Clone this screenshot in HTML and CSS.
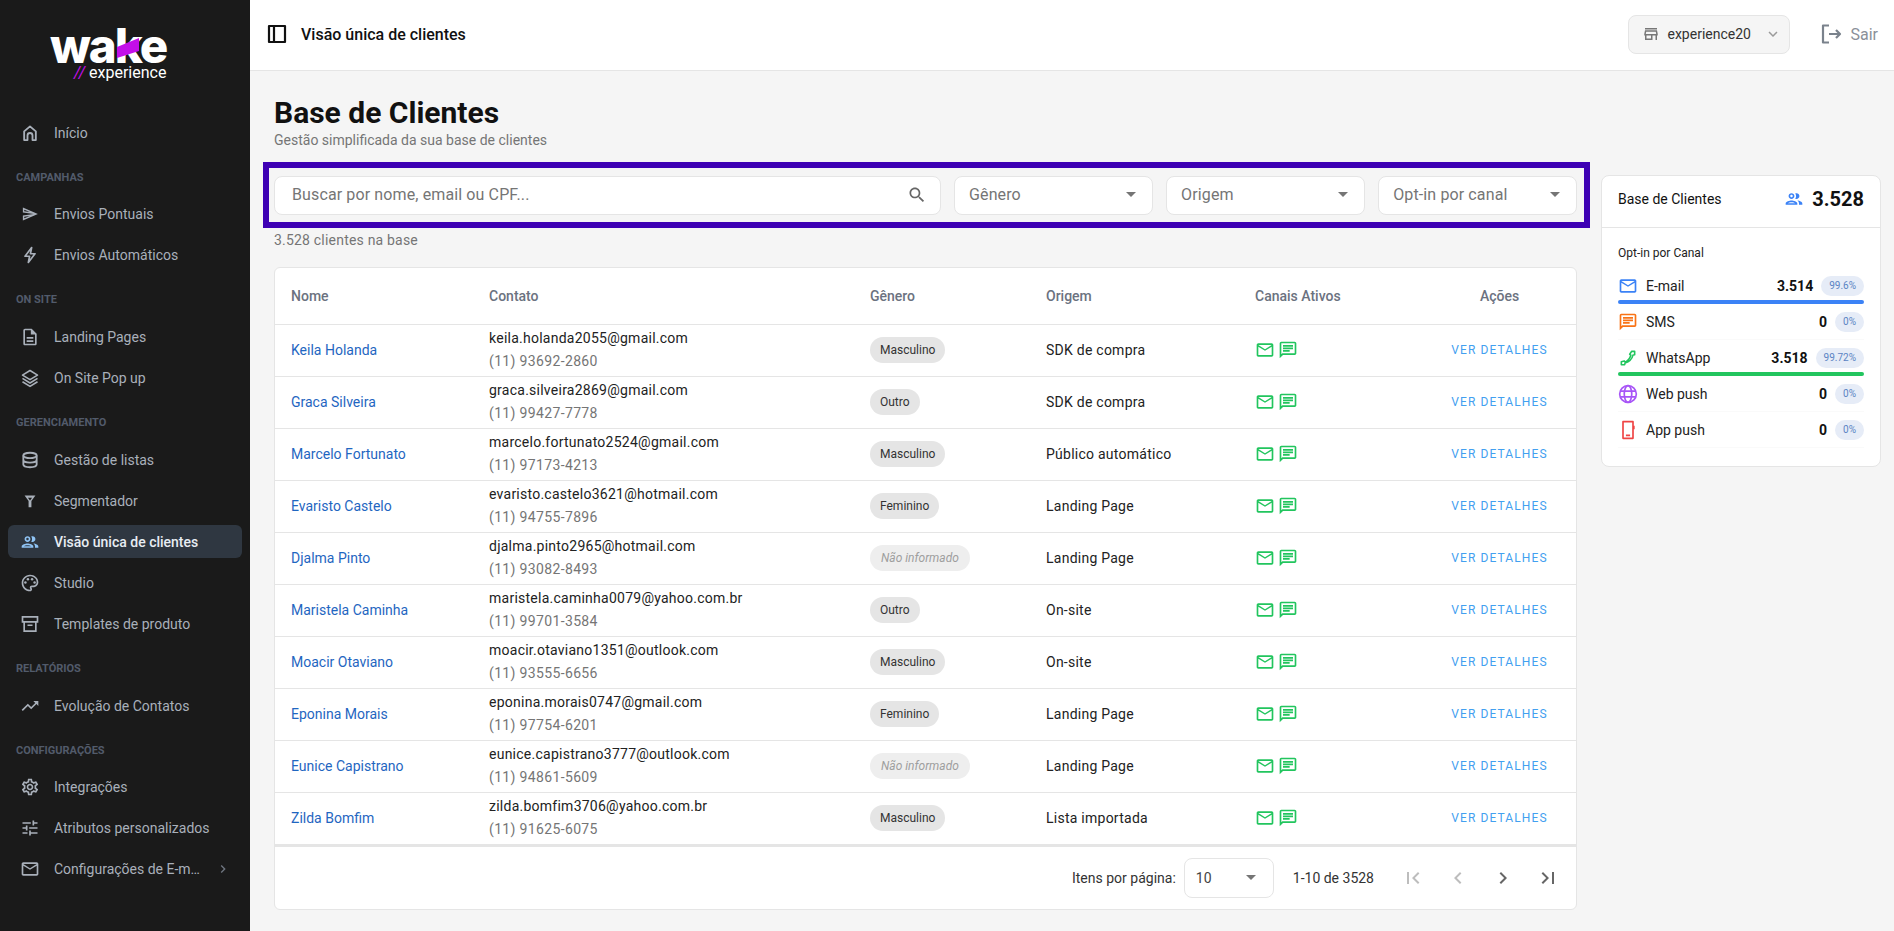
FILE: index.html
```html
<!DOCTYPE html>
<html lang="pt-BR">
<head>
    <meta charset="UTF-8">
    <meta name="viewport" content="width=device-width, initial-scale=1.0">
    <title>Visão única de clientes</title>
    <link rel="stylesheet" href="styles.css">
</head>
<body>

    <!-- icon sprite -->
    <svg class="sprite" xmlns="http://www.w3.org/2000/svg">
        <symbol id="i-home" viewBox="0 0 24 24"><path d="M5 20.500V10l7-6 7 6v10.500h-4V15a3 3 0 0 0-6 0v5.500z" fill="none" stroke="currentColor" stroke-width="2.200" stroke-linejoin="round"/></symbol>
        <symbol id="i-send" viewBox="-2 -2 28 28"><path d="M4.010 6.030l7.510 3.220-7.520-1 .01-2.220m7.500 8.720L4 17.970v-2.220l7.510-1M2.010 3L2 10l15 2-15 2 .01 7L23 12 2.010 3z"/></symbol>
        <symbol id="i-bolt" viewBox="0 0 24 24"><path d="M14 3L6 13.500h5.500L10 21l8-10.500h-5.500z" fill="none" stroke="currentColor" stroke-width="2" stroke-linejoin="round"/></symbol>
        <symbol id="i-doc" viewBox="0 0 24 24"><path d="M8 16h8v2H8zm0-4h8v2H8zm6-10H6c-1.100 0-2 .9-2 2v16c0 1.100.89 2 1.990 2H18c1.100 0 2-.9 2-2V8l-6-6zm4 18H6V4h7v5h5v11z"/></symbol>
        <symbol id="i-layers" viewBox="0 0 24 24"><path d="M12 3l9 5.500-9 5.500-9-5.500zM3 12.500l9 5.500 9-5.500M3 16.500l9 5.500 9-5.500" fill="none" stroke="currentColor" stroke-width="1.900" stroke-linejoin="round"/></symbol>
        <symbol id="i-db" viewBox="0 0 24 24"><g fill="none" stroke="currentColor" stroke-width="2.200"><ellipse cx="12" cy="6.500" rx="8" ry="3.200"/><path d="M4 6.500v11c0 1.800 3.600 3.200 8 3.200s8-1.400 8-3.200v-11M4 12c0 1.800 3.600 3.200 8 3.200s8-1.400 8-3.200"/></g></symbol>
        <symbol id="i-filter" viewBox="0 0 24 24"><path d="M5.500 5.500h13l-4.800 6.500v7.500h-3.400V12zM9.500 8l2.500 3.300L14.500 8z" fill-rule="evenodd"/></symbol>
        <symbol id="i-group" viewBox="0 0 24 24"><path d="M9 13.750c-2.340 0-7 1.170-7 3.500V19h14v-1.750c0-2.330-4.660-3.500-7-3.500zM4.340 17c.84-.58 2.870-1.250 4.660-1.250s3.820.67 4.660 1.250H4.340zM9 12c1.930 0 3.500-1.570 3.500-3.500S10.930 5 9 5 5.500 6.570 5.500 8.500 7.070 12 9 12zm0-5c.83 0 1.500.67 1.500 1.500S9.830 10 9 10s-1.500-.67-1.500-1.500S8.170 7 9 7zm7.040 6.810c1.160.84 1.960 1.960 1.960 3.440V19h4v-1.750c0-2.020-3.500-3.170-5.960-3.440zM15 12c1.930 0 3.500-1.570 3.500-3.500S16.930 5 15 5c-.54 0-1.040.13-1.500.35.63.89 1 1.980 1 3.150s-.37 2.260-1 3.150c.46.22.96.35 1.500.35z"/></symbol>
        <symbol id="i-palette" viewBox="0 0 24 24"><path d="M12 22C6.490 22 2 17.510 2 12S6.490 2 12 2s10 4.040 10 9c0 3.310-2.690 6-6 6h-1.770c-.28 0-.5.22-.5.5 0 .12.05.23.13.33.41.47.64 1.060.64 1.670 0 1.380-1.120 2.500-2.500 2.500zm0-18c-4.410 0-8 3.590-8 8s3.590 8 8 8c.28 0 .5-.22.5-.5 0-.16-.08-.28-.14-.35-.41-.46-.63-1.050-.63-1.650 0-1.380 1.120-2.500 2.500-2.500H16c2.210 0 4-1.790 4-4 0-3.860-3.590-7-8-7z"/><circle cx="6.500" cy="11.500" r="1.500"/><circle cx="9.500" cy="7.500" r="1.500"/><circle cx="14.500" cy="7.500" r="1.500"/><circle cx="17.500" cy="11.500" r="1.500"/></symbol>
        <symbol id="i-archive" viewBox="0 0 24 24"><path d="M3 3.500h18v6H3zm2 6h14v11H5zm4 4h6" fill="none" stroke="currentColor" stroke-width="2"/></symbol>
        <symbol id="i-trend" viewBox="0 0 24 24"><path d="M16 6l2.290 2.290-4.880 4.880-4-4L2 16.590 3.410 18l6-6 4 4 6.300-6.290L22 12V6z"/></symbol>
        <symbol id="i-gear" viewBox="0 0 24 24"><path d="M19.430 12.980c.04-.32.07-.64.07-.98 0-.34-.03-.66-.07-.98l2.110-1.650c.19-.15.24-.42.12-.64l-2-3.460c-.09-.16-.26-.25-.44-.25-.06 0-.12.01-.17.03l-2.490 1c-.52-.4-1.080-.73-1.690-.98l-.38-2.650C14.460 2.180 14.250 2 14 2h-4c-.25 0-.46.18-.49.42l-.38 2.650c-.61.25-1.170.59-1.690.98l-2.490-1c-.06-.02-.12-.03-.18-.03-.17 0-.34.09-.43.25l-2 3.460c-.13.22-.07.49.12.64l2.110 1.650c-.04.32-.07.65-.07.98 0 .33.03.66.07.98l-2.110 1.650c-.19.15-.24.42-.12.64l2 3.460c.09.16.26.25.44.25.06 0 .12-.01.17-.03l2.490-1c.52.4 1.080.73 1.690.98l.38 2.650c.03.24.24.42.49.42h4c.25 0 .46-.18.49-.42l.38-2.650c.61-.25 1.170-.59 1.690-.98l2.490 1c.06.02.12.03.18.03.17 0 .34-.09.43-.25l2-3.460c.12-.22.07-.49-.12-.64l-2.110-1.650zm-1.980-1.710c.04.31.05.52.05.73 0 .21-.02.43-.05.73l-.14 1.130.89.7 1.080.84-.7 1.210-1.270-.51-1.040-.42-.9.68c-.43.32-.84.56-1.250.73l-1.060.43-.16 1.130-.2 1.350h-1.400l-.19-1.350-.16-1.130-1.060-.43c-.43-.18-.83-.41-1.230-.71l-.91-.7-1.060.43-1.270.51-.7-1.210 1.080-.84.89-.7-.14-1.130c-.03-.31-.05-.54-.05-.74s.02-.43.05-.73l.14-1.130-.89-.7-1.080-.84.7-1.210 1.270.51 1.040.42.9-.68c.43-.32.84-.56 1.250-.73l1.060-.43.16-1.130.2-1.350h1.390l.19 1.350.16 1.130 1.060.43c.43.18.83.41 1.230.71l.91.7 1.060-.43 1.270-.51.7 1.210-1.070.85-.89.7.14 1.130zM12 8c-2.210 0-4 1.790-4 4s1.790 4 4 4 4-1.790 4-4-1.790-4-4-4zm0 6c-1.100 0-2-.9-2-2s.9-2 2-2 2 .9 2 2-.9 2-2 2z"/></symbol>
        <symbol id="i-tune" viewBox="0 0 24 24"><path d="M3 17v2h6v-2H3zM3 5v2h10V5H3zm10 16v-2h8v-2h-8v-2h-2v6h2zM7 9v2H3v2h4v2h2V9H7zm14 4v-2H11v2h10zm-6-4h2V7h4V5h-4V3h-2v6z"/></symbol>
        <symbol id="i-mail" viewBox="0 0 24 24"><path d="M22 6c0-1.100-.9-2-2-2H4c-1.100 0-2 .9-2 2v12c0 1.100.9 2 2 2h16c1.100 0 2-.9 2-2V6zm-2 0l-8 5-8-5h16zm0 12H4V8l8 5 8-5v10z"/></symbol>
        <symbol id="i-chat" viewBox="0 0 24 24"><path d="M20 2H4c-1.100 0-2 .9-2 2v18l4-4h14c1.100 0 2-.9 2-2V4c0-1.100-.9-2-2-2zm0 14H5.170L4 17.170V4h16v12zM6 12h8v2H6zm0-3h12v2H6zm0-3h12v2H6z"/></symbol>
        <symbol id="i-phone" viewBox="0 0 24 24"><path d="M16.500 4h3.500v4l-2 .5c-1 4-4.500 8-9.500 9.500L8 20H4v-3.500l3.500-1 1 1.500c3-1.500 6-5 7-8.500l-1.500-1z" fill="none" stroke="currentColor" stroke-width="1.900" stroke-linejoin="round"/></symbol>
        <symbol id="i-globe" viewBox="0 0 24 24"><g fill="none" stroke="currentColor" stroke-width="2"><circle cx="12" cy="12" r="10"/><ellipse cx="12" cy="12" rx="4.500" ry="10"/><path d="M3 8.500h18M3 15.500h18"/></g></symbol>
        <symbol id="i-mobile" viewBox="0 0 24 24"><path d="M6 2h12v20H6zM9.500 18.500h5M19 7v4" fill="none" stroke="currentColor" stroke-width="2" stroke-linejoin="round"/></symbol>
        <symbol id="i-store" viewBox="0 0 24 24"><path d="M20 4H4v2h16V4zm1 10v-2l-1-5H4l-1 5v2h1v6h10v-6h4v6h2v-6h1zm-9 4H6v-4h6v4zm-6.960-6l.6-3h12.720l.6 3H5.040z"/></symbol>
        <symbol id="i-logout" viewBox="0 0 24 24"><path d="M10 3.500H4v17h6M10 12h10.500M17 8l4 4-4 4" fill="none" stroke="currentColor" stroke-width="2.200" stroke-linejoin="round"/></symbol>
        <symbol id="i-panel" viewBox="0 0 24 24"><path d="M4 4h16v16H4zM9 4v16" fill="none" stroke="currentColor" stroke-width="2.200" stroke-linejoin="round"/></symbol>
        <symbol id="i-search" viewBox="0 0 24 24"><path d="M15.500 14h-.79l-.28-.27C15.410 12.590 16 11.110 16 9.500 16 5.910 13.090 3 9.500 3S3 5.910 3 9.500 5.910 16 9.500 16c1.610 0 3.090-.59 4.230-1.570l.27.28v.79l5 4.990L20.490 19l-4.990-5zm-6 0C7.010 14 5 11.990 5 9.500S7.010 5 9.500 5 14 7.010 14 9.500 11.990 14 9.500 14z"/></symbol>
        <symbol id="i-expand" viewBox="0 0 24 24"><path d="M16.590 8.590L12 13.170 7.410 8.590 6 10l6 6 6-6z"/></symbol>
        <symbol id="i-right" viewBox="0 0 24 24"><path d="M10 6L8.590 7.410 13.170 12l-4.580 4.590L10 18l6-6z"/></symbol>
        <symbol id="i-left" viewBox="0 0 24 24"><path d="M15.410 7.410L14 6l-6 6 6 6 1.410-1.410L10.830 12z"/></symbol>
        <symbol id="i-first" viewBox="0 0 24 24"><path d="M18.410 16.590L13.820 12l4.590-4.590L17 6l-6 6 6 6zM6 6h2v12H6z"/></symbol>
        <symbol id="i-last" viewBox="0 0 24 24"><path d="M5.590 7.410L10.180 12l-4.590 4.590L7 18l6-6-6-6zM16 6h2v12h-2z"/></symbol>
    </svg>

    <div class="app">
        <aside class="sidebar">
            <div class="logo">
                <svg class="logo-mark" width="122" height="52" viewBox="0 0 122 52">
                    <text class="logo-word" x="0" y="43.500">wake</text>
                    <polygon class="logo-slash" points="67,28 89,19 89,32 67,39"/>
                </svg>
                <div class="logo-sub"><span class="logo-bars">//</span> experience</div>
            </div>
            <nav class="nav">
                <a class="nav-item"><svg class="nav-icon"><use href="#i-home"/></svg>Início</a>
                <div class="nav-label">Campanhas</div>
                <a class="nav-item"><svg class="nav-icon"><use href="#i-send"/></svg>Envios Pontuais</a>
                <a class="nav-item"><svg class="nav-icon"><use href="#i-bolt"/></svg>Envios Automáticos</a>
                <div class="nav-label">On site</div>
                <a class="nav-item"><svg class="nav-icon"><use href="#i-doc"/></svg>Landing Pages</a>
                <a class="nav-item"><svg class="nav-icon"><use href="#i-layers"/></svg>On Site Pop up</a>
                <div class="nav-label">Gerenciamento</div>
                <a class="nav-item"><svg class="nav-icon"><use href="#i-db"/></svg>Gestão de listas</a>
                <a class="nav-item"><svg class="nav-icon"><use href="#i-filter"/></svg>Segmentador</a>
                <a class="nav-item active"><svg class="nav-icon"><use href="#i-group"/></svg>Visão única de clientes</a>
                <a class="nav-item"><svg class="nav-icon"><use href="#i-palette"/></svg>Studio</a>
                <a class="nav-item"><svg class="nav-icon"><use href="#i-archive"/></svg>Templates de produto</a>
                <div class="nav-label">Relatórios</div>
                <a class="nav-item"><svg class="nav-icon"><use href="#i-trend"/></svg>Evolução de Contatos</a>
                <div class="nav-label">Configurações</div>
                <a class="nav-item"><svg class="nav-icon"><use href="#i-gear"/></svg>Integrações</a>
                <a class="nav-item"><svg class="nav-icon"><use href="#i-tune"/></svg>Atributos personalizados</a>
                <a class="nav-item"><svg class="nav-icon"><use href="#i-mail"/></svg>Configurações de E-m…<svg class="nav-more"><use href="#i-right"/></svg></a>
            </nav>
        </aside>

        <div class="main">
            <header class="topbar">
                <svg class="panel-icon"><use href="#i-panel"/></svg>
                <div class="topbar-title">Visão única de clientes</div>
                <div class="store-select">
                    <svg class="store-icon"><use href="#i-store"/></svg>
                    <span>experience20</span>
                    <svg class="store-arrow"><use href="#i-expand"/></svg>
                </div>
                <div class="logout"><svg class="logout-icon"><use href="#i-logout"/></svg>Sair</div>
            </header>

            <div class="content">
                <div class="left">
                    <h1 class="page-title">Base de Clientes</h1>
                    <p class="page-sub">Gestão simplificada da sua base de clientes</p>

                    <div class="filters">
                        <div class="field search">
                            <span class="placeholder">Buscar por nome, email ou CPF...</span>
                            <svg class="search-icon"><use href="#i-search"/></svg>
                        </div>
                        <div class="field select"><span class="placeholder">Gênero</span><span class="caret"></span></div>
                        <div class="field select"><span class="placeholder">Origem</span><span class="caret"></span></div>
                        <div class="field select"><span class="placeholder">Opt-in por canal</span><span class="caret"></span></div>
                    </div>
                    <p class="count">3.528 clientes na base</p>

                    <div class="table-card">
                        <table class="clients">
                            <colgroup>
                                <col class="col-name"><col class="col-contact"><col class="col-gender">
                                <col class="col-origin"><col class="col-channels"><col class="col-actions">
                            </colgroup>
                            <thead>
                                <tr><th>Nome</th><th>Contato</th><th>Gênero</th><th>Origem</th><th>Canais Ativos</th><th class="center">Ações</th></tr>
                            </thead>
                            <tbody>
                                <tr>
                                    <td class="name">Keila Holanda</td>
                                    <td><div class="email">keila.holanda2055@gmail.com</div><div class="phone">(11) 93692-2860</div></td>
                                    <td><span class="chip">Masculino</span></td>
                                    <td class="origin">SDK de compra</td>
                                    <td><svg class="ch"><use href="#i-mail"/></svg><svg class="ch"><use href="#i-chat"/></svg></td>
                                    <td class="center"><a class="details">Ver detalhes</a></td>
                                </tr>
                                <tr>
                                    <td class="name">Graca Silveira</td>
                                    <td><div class="email">graca.silveira2869@gmail.com</div><div class="phone">(11) 99427-7778</div></td>
                                    <td><span class="chip">Outro</span></td>
                                    <td class="origin">SDK de compra</td>
                                    <td><svg class="ch"><use href="#i-mail"/></svg><svg class="ch"><use href="#i-chat"/></svg></td>
                                    <td class="center"><a class="details">Ver detalhes</a></td>
                                </tr>
                                <tr>
                                    <td class="name">Marcelo Fortunato</td>
                                    <td><div class="email">marcelo.fortunato2524@gmail.com</div><div class="phone">(11) 97173-4213</div></td>
                                    <td><span class="chip">Masculino</span></td>
                                    <td class="origin">Público automático</td>
                                    <td><svg class="ch"><use href="#i-mail"/></svg><svg class="ch"><use href="#i-chat"/></svg></td>
                                    <td class="center"><a class="details">Ver detalhes</a></td>
                                </tr>
                                <tr>
                                    <td class="name">Evaristo Castelo</td>
                                    <td><div class="email">evaristo.castelo3621@hotmail.com</div><div class="phone">(11) 94755-7896</div></td>
                                    <td><span class="chip">Feminino</span></td>
                                    <td class="origin">Landing Page</td>
                                    <td><svg class="ch"><use href="#i-mail"/></svg><svg class="ch"><use href="#i-chat"/></svg></td>
                                    <td class="center"><a class="details">Ver detalhes</a></td>
                                </tr>
                                <tr>
                                    <td class="name">Djalma Pinto</td>
                                    <td><div class="email">djalma.pinto2965@hotmail.com</div><div class="phone">(11) 93082-8493</div></td>
                                    <td><span class="chip muted">Não informado</span></td>
                                    <td class="origin">Landing Page</td>
                                    <td><svg class="ch"><use href="#i-mail"/></svg><svg class="ch"><use href="#i-chat"/></svg></td>
                                    <td class="center"><a class="details">Ver detalhes</a></td>
                                </tr>
                                <tr>
                                    <td class="name">Maristela Caminha</td>
                                    <td><div class="email">maristela.caminha0079@yahoo.com.br</div><div class="phone">(11) 99701-3584</div></td>
                                    <td><span class="chip">Outro</span></td>
                                    <td class="origin">On-site</td>
                                    <td><svg class="ch"><use href="#i-mail"/></svg><svg class="ch"><use href="#i-chat"/></svg></td>
                                    <td class="center"><a class="details">Ver detalhes</a></td>
                                </tr>
                                <tr>
                                    <td class="name">Moacir Otaviano</td>
                                    <td><div class="email">moacir.otaviano1351@outlook.com</div><div class="phone">(11) 93555-6656</div></td>
                                    <td><span class="chip">Masculino</span></td>
                                    <td class="origin">On-site</td>
                                    <td><svg class="ch"><use href="#i-mail"/></svg><svg class="ch"><use href="#i-chat"/></svg></td>
                                    <td class="center"><a class="details">Ver detalhes</a></td>
                                </tr>
                                <tr>
                                    <td class="name">Eponina Morais</td>
                                    <td><div class="email">eponina.morais0747@gmail.com</div><div class="phone">(11) 97754-6201</div></td>
                                    <td><span class="chip">Feminino</span></td>
                                    <td class="origin">Landing Page</td>
                                    <td><svg class="ch"><use href="#i-mail"/></svg><svg class="ch"><use href="#i-chat"/></svg></td>
                                    <td class="center"><a class="details">Ver detalhes</a></td>
                                </tr>
                                <tr>
                                    <td class="name">Eunice Capistrano</td>
                                    <td><div class="email">eunice.capistrano3777@outlook.com</div><div class="phone">(11) 94861-5609</div></td>
                                    <td><span class="chip muted">Não informado</span></td>
                                    <td class="origin">Landing Page</td>
                                    <td><svg class="ch"><use href="#i-mail"/></svg><svg class="ch"><use href="#i-chat"/></svg></td>
                                    <td class="center"><a class="details">Ver detalhes</a></td>
                                </tr>
                                <tr>
                                    <td class="name">Zilda Bomfim</td>
                                    <td><div class="email">zilda.bomfim3706@yahoo.com.br</div><div class="phone">(11) 91625-6075</div></td>
                                    <td><span class="chip">Masculino</span></td>
                                    <td class="origin">Lista importada</td>
                                    <td><svg class="ch"><use href="#i-mail"/></svg><svg class="ch"><use href="#i-chat"/></svg></td>
                                    <td class="center"><a class="details">Ver detalhes</a></td>
                                </tr>
                            </tbody>
                        </table>
                        <div class="pager">
                            <span class="pager-label">Itens por página:</span>
                            <div class="pager-select">10<span class="caret"></span></div>
                            <span class="pager-range">1-10 de 3528</span>
                            <svg class="pager-btn off"><use href="#i-first"/></svg>
                            <svg class="pager-btn off"><use href="#i-left"/></svg>
                            <svg class="pager-btn"><use href="#i-right"/></svg>
                            <svg class="pager-btn"><use href="#i-last"/></svg>
                        </div>
                    </div>
                </div>

                <aside class="summary">
                    <div class="summary-head">
                        <span class="summary-title">Base de Clientes</span>
                        <svg class="summary-icon"><use href="#i-group"/></svg>
                        <span class="summary-total">3.528</span>
                    </div>
                    <div class="summary-body">
                        <div class="summary-sub">Opt-in por Canal</div>
                        <div class="channel">
                            <svg class="channel-icon blue"><use href="#i-mail"/></svg>
                            <span class="channel-name">E-mail</span><span class="channel-num">3.514</span><span class="pct">99.6%</span>
                            <div class="bar bar-blue"></div>
                        </div>
                        <div class="channel">
                            <svg class="channel-icon orange"><use href="#i-chat"/></svg>
                            <span class="channel-name">SMS</span><span class="channel-num">0</span><span class="pct">0%</span>
                        </div>
                        <div class="channel">
                            <svg class="channel-icon green"><use href="#i-phone"/></svg>
                            <span class="channel-name">WhatsApp</span><span class="channel-num">3.518</span><span class="pct">99.72%</span>
                            <div class="bar bar-green"></div>
                        </div>
                        <div class="channel">
                            <svg class="channel-icon purple"><use href="#i-globe"/></svg>
                            <span class="channel-name">Web push</span><span class="channel-num">0</span><span class="pct">0%</span>
                        </div>
                        <div class="channel">
                            <svg class="channel-icon red"><use href="#i-mobile"/></svg>
                            <span class="channel-name">App push</span><span class="channel-num">0</span><span class="pct">0%</span>
                        </div>
                    </div>
                </aside>
            </div>
        </div>
    </div>

</body>
</html>
```

FILE: styles.css
```css
* {
    box-sizing: border-box;
}
body {
    margin: 0;
    font-family: Roboto, "Liberation Sans", sans-serif;
    font-size: 14px;
    color: #1a1a1a;
    background-color: #f5f5f5;
}
svg {
    fill: currentColor;
    flex-shrink: 0;
}
.sprite {
    display: none;
}
.app {
    display: flex;
    height: 931px;
    overflow: hidden;
}

/* sidebar */
.sidebar {
    width: 250px;
    flex-shrink: 0;
    background-color: #1a1a1a;
}
.logo {
    height: 116px;
    padding: 19px 0 0 50px;
    color: #fff;
}
.logo-mark {
    display: block;
    overflow: visible;
}
.logo-word {
    font-family: Inter, sans-serif;
    font-size: 47.5px;
    font-weight: 800;
    letter-spacing: -2px;
}
.logo-slash {
    fill: #c30fe8;
}
.logo-sub {
    margin: -8px 0 0 24px;
    font-size: 16px;
    line-height: 20px;
}
.logo-bars {
    color: #c30fe8;
    font-style: italic;
}
.nav {
    padding: 0 8px;
}
.nav-item {
    display: flex;
    align-items: center;
    height: 33px;
    margin-bottom: 8px;
    padding-left: 12px;
    border-radius: 6px;
    color: #a9b0ba;
    font-size: 14px;
}
.nav-item.active {
    background-color: #2f3741;
    color: #e8edf3;
    font-weight: 500;
}
.nav-item.active .nav-icon {
    color: #90c4f5;
}
.nav-icon {
    width: 20px;
    height: 20px;
    margin-right: 14px;
}
.nav-more {
    width: 16px;
    height: 16px;
    margin-left: 15px;
    color: #6f7680;
}
.nav-label {
    padding: 11.5px 8px 12.25px;
    font-size: 11px;
    font-weight: 700;
    line-height: 17px;
    color: #525b6b;
    text-transform: uppercase;
}

/* topbar */
.main {
    flex: 1;
    min-width: 0;
}
.topbar {
    display: flex;
    align-items: center;
    height: 71px;
    padding: 0 16px 2px 15px;
    background-color: #fff;
    border-bottom: 1px solid #e5e5e5;
}
.panel-icon {
    width: 24px;
    height: 24px;
    color: #111;
}
.topbar-title {
    flex: 1;
    margin-left: 12px;
    font-size: 16px;
    font-weight: 500;
    color: #111;
}
.store-select {
    display: flex;
    align-items: center;
    width: 162px;
    height: 39px;
    padding: 0 7px 0 13px;
    background-color: #f5f5f5;
    border: 1px solid #e5e5e5;
    border-radius: 8px;
    color: #333;
}
.store-icon {
    width: 18px;
    height: 18px;
    margin-right: 7px;
    color: #777;
}
.store-arrow {
    width: 18px;
    height: 18px;
    margin-left: auto;
    color: #9a9a9a;
}
.logout {
    display: flex;
    align-items: center;
    margin-left: 29px;
    font-size: 16px;
    color: #8a9099;
}
.logout-icon {
    width: 24px;
    height: 24px;
    margin-right: 7px;
    color: #7a828c;
}

/* content */
.content {
    display: flex;
    gap: 24px;
    padding: 24px 13px 0 24px;
}
.left {
    flex: 1;
    min-width: 0;
}
.page-title {
    margin: 0;
    font-size: 30px;
    font-weight: 700;
    line-height: 36px;
    color: #111;
}
.page-sub {
    margin: -1px 0 0;
    line-height: 20px;
    color: #757575;
}
.filters {
    display: flex;
    gap: 12.8px;
    margin: 12px -13px 0 -11px;
    padding: 7.5px 7px 7.5px 5px;
    border: 6px solid #3e00b4;
}
.field {
    display: flex;
    align-items: center;
    height: 39px;
    padding-bottom: 1px;
    background-color: #fff;
    border: 1px solid #e5e5e5;
    border-radius: 8px;
}
.search {
    flex: 1;
    padding-right: 13px;
    padding-left: 17px;
    justify-content: space-between;
}
.select {
    width: 199.3px;
    padding-left: 14.5px;
}
.placeholder {
    font-size: 16px;
    letter-spacing: 0.12px;
    color: #757575;
}
.search-icon {
    width: 20px;
    height: 20px;
    color: #666;
}
.caret {
    width: 0;
    height: 0;
    margin-left: auto;
    border-left: 5px solid transparent;
    border-right: 5px solid transparent;
    border-top: 5px solid #757575;
}
.select .caret {
    margin-right: 16px;
}
.count {
    margin: 2px 0 17px;
    line-height: 20px;
    letter-spacing: 0.2px;
    color: #757575;
}

/* table */
.table-card {
    background-color: #fff;
    border: 1px solid #e5e5e5;
    border-radius: 6px;
    overflow: hidden;
}
.clients {
    width: 100%;
    table-layout: fixed;
    border-collapse: collapse;
}
.col-name { width: 198px; }
.col-contact { width: 381px; }
.col-gender { width: 176px; }
.col-origin { width: 209px; }
.col-channels { width: 184px; }
.clients th {
    height: 56px;
    padding: 0 16px;
    text-align: left;
    font-weight: 500;
    color: #6b7280;
    border-bottom: 1px solid #e5e5e5;
}
.clients td {
    height: 52px;
    padding: 0 16px;
    border-bottom: 1px solid #e5e5e5;
}
.clients .center {
    text-align: center;
}
.name {
    color: #1f66c1;
}
.email {
    line-height: 23px;
    color: #222;
    letter-spacing: 0.25px;
}
.phone {
    line-height: 23px;
    color: #757575;
    letter-spacing: 0.35px;
}
.chip {
    display: inline-block;
    height: 26px;
    padding: 0 10px;
    border-radius: 13px;
    background-color: #e5e5e5;
    font-size: 12px;
    line-height: 26px;
    color: #333;
}
.chip.muted {
    padding: 0 11px;
    background-color: #eee;
    color: #9e9e9e;
    font-style: italic;
}
.origin {
    color: #222;
    letter-spacing: 0.25px;
}
.ch {
    width: 20px;
    height: 20px;
    margin-right: 3px;
    color: #22c55e;
    vertical-align: middle;
}
.details {
    display: block;
    margin-top: -1px;
    font-size: 12px;
    line-height: 18px;
    letter-spacing: 1.1px;
    color: #42a0f0;
    text-transform: uppercase;
}
.pager {
    display: flex;
    align-items: center;
    justify-content: flex-end;
    height: 64px;
    padding-right: 16px;
    border-top: 2px solid #e5e5e5;
}
.pager-label {
    margin-right: 8px;
    color: #333;
}
.pager-select {
    display: flex;
    align-items: center;
    width: 90px;
    height: 40px;
    padding: 0 17px 0 11px;
    border: 1px solid #e5e5e5;
    border-radius: 8px;
    color: #444;
}
.pager-range {
    margin: 0 27px 0 19px;
    color: #333;
}
.pager-btn {
    width: 24px;
    height: 24px;
    margin-left: 21px;
    color: #666;
}
.pager-btn:first-of-type {
    margin-left: 0;
}
.pager-btn.off {
    color: #bdbdbd;
}

/* right card */
.summary {
    width: 280px;
    height: 292px;
    margin-top: 80px;
    flex-shrink: 0;
    background-color: #fff;
    border: 1px solid #e5e5e5;
    border-radius: 8px;
}
.summary-head {
    display: flex;
    align-items: center;
    height: 52px;
    padding: 0 16px 5px;
    border-bottom: 1px solid #e5e5e5;
}
.summary-title {
    flex: 1;
    color: #111;
}
.summary-icon {
    width: 20px;
    height: 20px;
    margin-right: 8px;
    color: #3b82f6;
}
.summary-total {
    font-size: 20px;
    font-weight: 700;
    color: #111;
}
.summary-body {
    padding: 16px 16px 0;
}
.summary-sub {
    height: 24px;
    font-size: 12px;
    line-height: 18px;
    color: #222;
}
.channel {
    position: relative;
    display: flex;
    align-items: center;
    height: 36px;
    border-bottom: 1px solid #fafafa;
}
.channel-icon {
    width: 20px;
    height: 20px;
    margin-right: 8px;
}
.blue { color: #3b82f6; }
.orange { color: #f97316; }
.green { color: #22c55e; }
.purple { color: #a855f7; }
.red { color: #ef4444; }
.channel-name {
    flex: 1;
    color: #222;
}
.channel-num {
    margin-right: 8px;
    font-weight: 700;
    color: #111;
}
.pct {
    height: 20px;
    padding: 0 8px;
    border-radius: 10px;
    background-color: #e6ecf7;
    font-size: 10px;
    line-height: 20px;
    color: #5b84c4;
}
.bar {
    position: absolute;
    left: 0;
    right: 0;
    bottom: -1px;
    height: 4px;
    border-radius: 2px;
}
.bar-blue { background-color: #3b82f6; }
.bar-green { background-color: #22c55e; }
```
